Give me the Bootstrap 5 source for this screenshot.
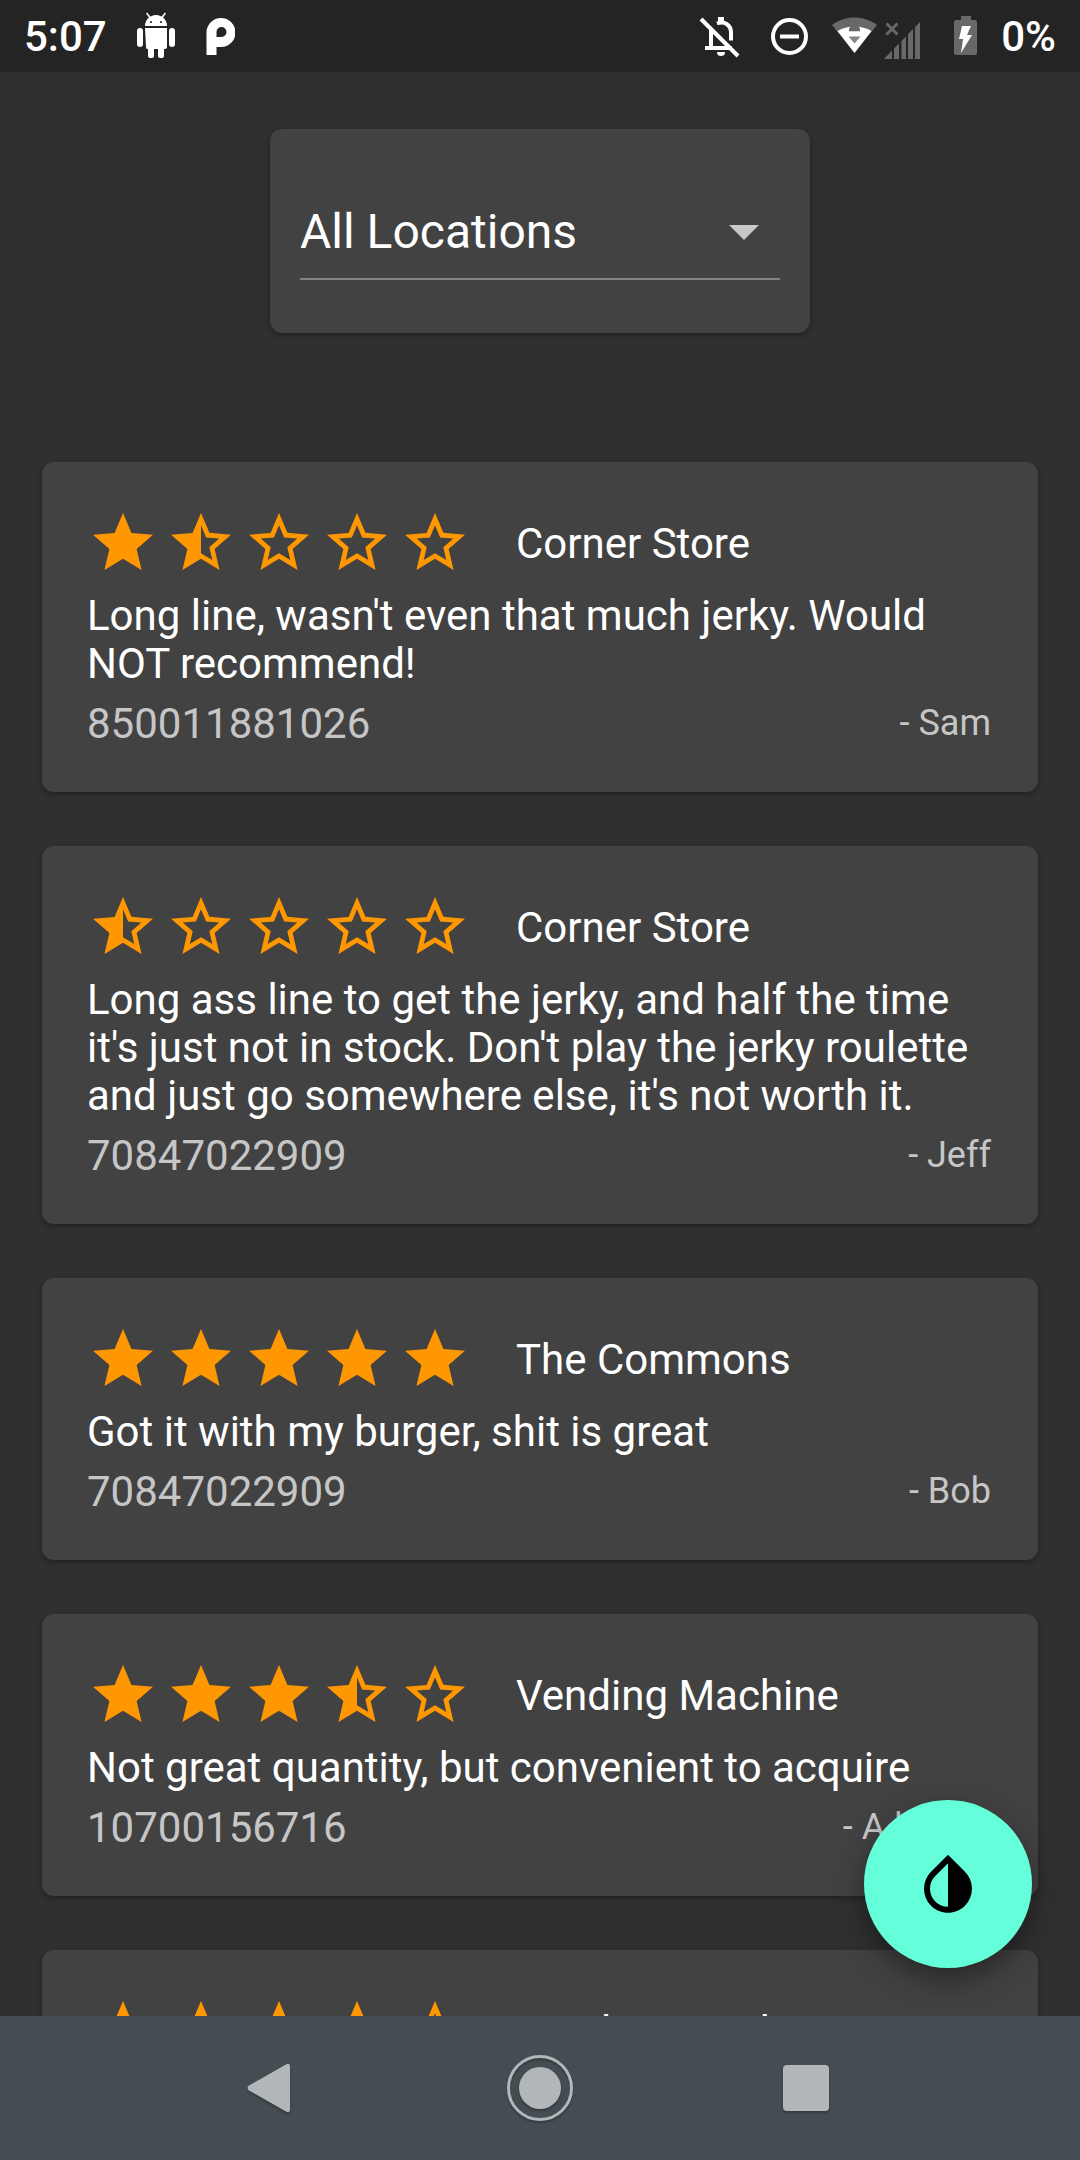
<!DOCTYPE html>
<html lang="en">
<head>
<meta charset="utf-8">
<meta name="viewport" content="width=device-width, initial-scale=1">
<title>Reviews</title>
<link href="https://cdn.jsdelivr.net/npm/bootstrap@5.3.0/dist/css/bootstrap.min.css" rel="stylesheet">
<style>
  body { background: #303030; color: #fff; font-family: Roboto, sans-serif; font-size: 42px; line-height: 48px; }
  .status-bar { height: 72px; background: #242424; font-weight: 500; padding: 0 24px; }
  .status-bar svg { height: 72px; display: block; }
  .status-bar span { padding-top: 2px; }
  .status-left { gap: 30px; }
  .status-right { gap: 16px; }
  .feed { padding: 57px 42px 0; min-height: 0; scrollbar-width: none; }
  .feed::-webkit-scrollbar { display: none; }
  .panel { background: #424242; color: #fff; border: 0; border-radius: 12px; box-shadow: 0 2px 5px rgba(0, 0, 0, .35); }
  .filter-panel { width: 540px; max-width: 100%; padding: 55px 30px 53px; margin: 0 auto 129px; }
  .location-select {
    --bs-form-select-bg-img: url("data:image/svg+xml,%3csvg xmlns='http://www.w3.org/2000/svg' viewBox='0 0 24 24'%3e%3cpath fill='%23c8c8c8' d='M7 10l5 5 5-5z'/%3e%3c/svg%3e");
    height: 96px; padding: 2px 72px 0 0; color: #fff; background-color: transparent;
    background-position: right center; background-size: 72px 72px;
    border: 0; border-bottom: 2px solid #848484; border-radius: 0; font-size: 48px; line-height: 56px;
  }
  .location-select option { color: #fff; background: #424242; }
  .review { padding: 45px 47px 44px 45px; margin-bottom: 54px; }
  .review-head { gap: 45px; margin-bottom: 13px; }
  .rating { gap: 6px; color: #ff9800; }
  .rating svg { width: 72px; height: 72px; }
  .place { font-size: 42px; line-height: 48px; font-weight: 400; padding-top: 2px; }
  .review-text { margin-bottom: 12px; }
  .review-meta { color: #c6c6c6; }
  .author { font-size: 36px; line-height: 42px; padding-bottom: 2px; }
  .fab { right: 48px; bottom: 192px; width: 168px; height: 168px; background: #64ffda; box-shadow: 0 12px 30px rgba(0, 0, 0, .4); }
  .fab:hover { background: #64ffda; }
  .fab svg { width: 72px; height: 72px; }
  .nav-keys { height: 144px; background: #454d53; padding: 0 13%; }
  .nav-keys svg { width: 72px; height: 72px; filter: drop-shadow(0 2px 1px rgba(0, 0, 0, .25)); }
</style>
</head>
<body>
<svg class="d-none" aria-hidden="true">
  <symbol id="star" viewBox="0 0 24 24"><path fill="currentColor" d="M12 17.27L18.18 21l-1.64-7.03L22 9.24l-7.19-.61L12 2 9.19 8.63 2 9.24l5.46 4.73L5.82 21z"/></symbol>
  <symbol id="star-half" viewBox="0 0 24 24"><path fill="currentColor" d="M22 9.24l-7.19-.62L12 2 9.19 8.63 2 9.24l5.46 4.73L5.82 21 12 17.27 18.18 21l-1.63-7.03L22 9.24zM12 15.4V6.1l1.71 4.04 4.38.38-3.32 2.88 1 4.28L12 15.4z"/></symbol>
  <symbol id="star-open" viewBox="0 0 24 24"><path fill="currentColor" d="M22 9.24l-7.19-.62L12 2 9.19 8.63 2 9.24l5.46 4.73L5.82 21 12 17.27 18.18 21l-1.63-7.03L22 9.24zM12 15.4l-3.76 2.27 1-4.28-3.32-2.88 4.38-.38L12 6.1l1.71 4.04 4.38.38-3.32 2.88 1 4.28L12 15.4z"/></symbol>
</svg>

<div class="vh-100 d-flex flex-column overflow-hidden">
  <header class="status-bar d-flex justify-content-between align-items-center flex-shrink-0">
    <div class="status-left d-flex align-items-center">
      <span>5:07</span>
      <svg width="38" viewBox="136 0 38 72" fill="#fff" aria-hidden="true">
        <path d="M144 26c0-6 4.500-11 11-11s11 5 11 11z"/>
        <path d="M146 13.500l3 4M164 13.500l-3 4" stroke="#fff" stroke-width="1.600" stroke-linecap="round"/>
        <circle cx="150" cy="22" r="1.100" fill="#242424"/><circle cx="160" cy="22" r="1.100" fill="#242424"/>
        <path d="M144 28h22v19a2 2 0 0 1-2 2h-1v7a2 2 0 0 1-2 2h-2a2 2 0 0 1-2-2v-7h-4v7a2 2 0 0 1-2 2h-2a2 2 0 0 1-2-2v-7h-1a2 2 0 0 1-1-2z"/>
        <rect x="136" y="28" width="6" height="19" rx="3"/><rect x="168" y="28" width="6" height="19" rx="3"/>
      </svg>
      <svg width="30" viewBox="205 0 30 72" aria-hidden="true">
        <path fill="#fff" fill-rule="evenodd" d="M206.500 55V32.500a14.500 14.500 0 1 1 14.500 14.500h-4.500v8zM216.500 37v-5a5 5 0 1 1 5 5z"/>
      </svg>
    </div>
    <div class="status-right d-flex align-items-center">
      <svg width="56" viewBox="698 0 56 72" fill="none" stroke="#fff" stroke-width="4" aria-hidden="true">
        <path d="M711 30v18M705 48h27M717 23.500c8-3 14 2 14 9v8"/>
        <path d="M721 17v5" stroke-width="6"/>
        <path d="M717 52h8a4 4 0 0 1-8 0z" fill="#fff" stroke="none"/>
        <path d="M701 19l37 37"/>
      </svg>
      <svg width="37" viewBox="770 0 37 72" fill="none" stroke="#fff" stroke-width="4" overflow="visible" aria-hidden="true">
        <circle cx="789.500" cy="36.500" r="16.500"/><path d="M780 36.500h19"/>
      </svg>
      <svg width="106" viewBox="823 0 106 72" aria-hidden="true">
        <path fill="#686868" d="M832 25c13-10 32-10 45 0L854.500 53z"/>
        <path fill="#fff" d="M837.500 31c10-6 24-6 34 0L854.500 53z"/>
        <path fill="#686868" d="M849 28.500l5.500-7.500 5.500 7.500v3h-11z"/>
        <path fill="#fff" d="M846 31.500h17v5h-17z"/>
        <path fill="#868686" d="M848.500 36.500h12l-6 7z"/>
        <path fill="#686868" d="M884 59l8-8.500V59zM894 59V48.500l5-5V59zM901.500 59V41l4.500-4.500V59zM908 59V34l5-5V59zM915 59V27l5-5V59z"/>
        <path stroke="#686868" stroke-width="3" d="M886.500 23.500l11 11M897.500 23.500l-11 11"/>
      </svg>
      <svg width="40" viewBox="945 0 40 72" aria-hidden="true">
        <path fill="#686868" d="M961 16h10v4h4a2 2 0 0 1 2 2v31a2 2 0 0 1-2 2h-19a2 2 0 0 1-2-2V22a2 2 0 0 1 2-2h5z"/>
        <path fill="#fff" d="M962 26h9l-4 9h5l-11 18 2-14h-4z"/>
      </svg>
      <span>0%</span>
    </div>
  </header>

  <main class="feed flex-grow-1 overflow-auto">
    <section class="panel filter-panel">
      <select id="location" class="form-select location-select" aria-label="Location">
        <option selected>All Locations</option>
        <option>Corner Store</option>
        <option>The Commons</option>
        <option>Vending Machine</option>
      </select>
    </section>

    <article class="card panel review">
      <div class="review-head d-flex align-items-center">
        <div class="rating d-flex" role="img" aria-label="1.5 of 5 stars">
          <svg><use href="#star"/></svg><svg><use href="#star-half"/></svg><svg><use href="#star-open"/></svg><svg><use href="#star-open"/></svg><svg><use href="#star-open"/></svg>
        </div>
        <h2 class="place mb-0">Corner Store</h2>
      </div>
      <p class="review-text">Long line, wasn't even that much jerky. Would NOT recommend!</p>
      <div class="review-meta d-flex justify-content-between align-items-center"><span>850011881026</span><span class="author">- Sam</span></div>
    </article>

    <article class="card panel review">
      <div class="review-head d-flex align-items-center">
        <div class="rating d-flex" role="img" aria-label="0.5 of 5 stars">
          <svg><use href="#star-half"/></svg><svg><use href="#star-open"/></svg><svg><use href="#star-open"/></svg><svg><use href="#star-open"/></svg><svg><use href="#star-open"/></svg>
        </div>
        <h2 class="place mb-0">Corner Store</h2>
      </div>
      <p class="review-text">Long ass line to get the jerky, and half the time it's just not in stock. Don't play the jerky roulette and just go somewhere else, it's not worth it.</p>
      <div class="review-meta d-flex justify-content-between align-items-center"><span>70847022909</span><span class="author">- Jeff</span></div>
    </article>

    <article class="card panel review">
      <div class="review-head d-flex align-items-center">
        <div class="rating d-flex" role="img" aria-label="5 of 5 stars">
          <svg><use href="#star"/></svg><svg><use href="#star"/></svg><svg><use href="#star"/></svg><svg><use href="#star"/></svg><svg><use href="#star"/></svg>
        </div>
        <h2 class="place mb-0">The Commons</h2>
      </div>
      <p class="review-text">Got it with my burger, shit is great</p>
      <div class="review-meta d-flex justify-content-between align-items-center"><span>70847022909</span><span class="author">- Bob</span></div>
    </article>

    <article class="card panel review">
      <div class="review-head d-flex align-items-center">
        <div class="rating d-flex" role="img" aria-label="3.5 of 5 stars">
          <svg><use href="#star"/></svg><svg><use href="#star"/></svg><svg><use href="#star"/></svg><svg><use href="#star-half"/></svg><svg><use href="#star-open"/></svg>
        </div>
        <h2 class="place mb-0">Vending Machine</h2>
      </div>
      <p class="review-text">Not great quantity, but convenient to acquire</p>
      <div class="review-meta d-flex justify-content-between align-items-center"><span>10700156716</span><span class="author">- A bunny</span></div>
    </article>

    <article class="card panel review">
      <div class="review-head d-flex align-items-center">
        <div class="rating d-flex" role="img" aria-label="4 of 5 stars">
          <svg><use href="#star"/></svg><svg><use href="#star"/></svg><svg><use href="#star"/></svg><svg><use href="#star"/></svg><svg><use href="#star-open"/></svg>
        </div>
        <h2 class="place mb-0">Vending Machine</h2>
      </div>
    </article>
  </main>

  <nav class="nav-keys d-flex flex-shrink-0" aria-label="System">
    <button type="button" class="btn border-0 p-0 flex-fill" aria-label="Back">
      <svg viewBox="0 0 72 72"><path fill="#b2b7b9" d="M11 33.500L48 12.500q4-2 4 2v43q0 4-4 2L11 38.500q-3-2.500 0-5z"/></svg>
    </button>
    <button type="button" class="btn border-0 p-0 flex-fill" aria-label="Home">
      <svg viewBox="0 0 72 72"><circle cx="36" cy="36" r="31.500" fill="none" stroke="#b2b7b9" stroke-width="3"/><circle cx="36" cy="36" r="21" fill="#b2b7b9"/></svg>
    </button>
    <button type="button" class="btn border-0 p-0 flex-fill" aria-label="Recent apps">
      <svg viewBox="0 0 72 72"><rect x="13" y="13" width="46" height="46" rx="4" fill="#b2b7b9"/></svg>
    </button>
  </nav>
</div>

<button type="button" class="fab btn border-0 rounded-circle position-fixed d-flex align-items-center justify-content-center p-0" aria-label="Toggle theme">
  <svg viewBox="0 0 24 24"><path fill="#000" d="M17.660 7.930L12 2.270 6.340 7.930c-3.120 3.120-3.120 8.190 0 11.310C7.900 20.800 9.950 21.580 12 21.580c2.050 0 4.100-.78 5.660-2.340 3.120-3.120 3.120-8.190 0-11.310zM12 19.590c-1.600 0-3.110-.62-4.240-1.760C6.620 16.690 6 15.190 6 13.590s.62-3.110 1.760-4.240L12 5.100v14.490z"/></svg>
</button>
<script src="https://cdn.jsdelivr.net/npm/bootstrap@5.3.0/dist/js/bootstrap.bundle.min.js"></script>
</body>
</html>
